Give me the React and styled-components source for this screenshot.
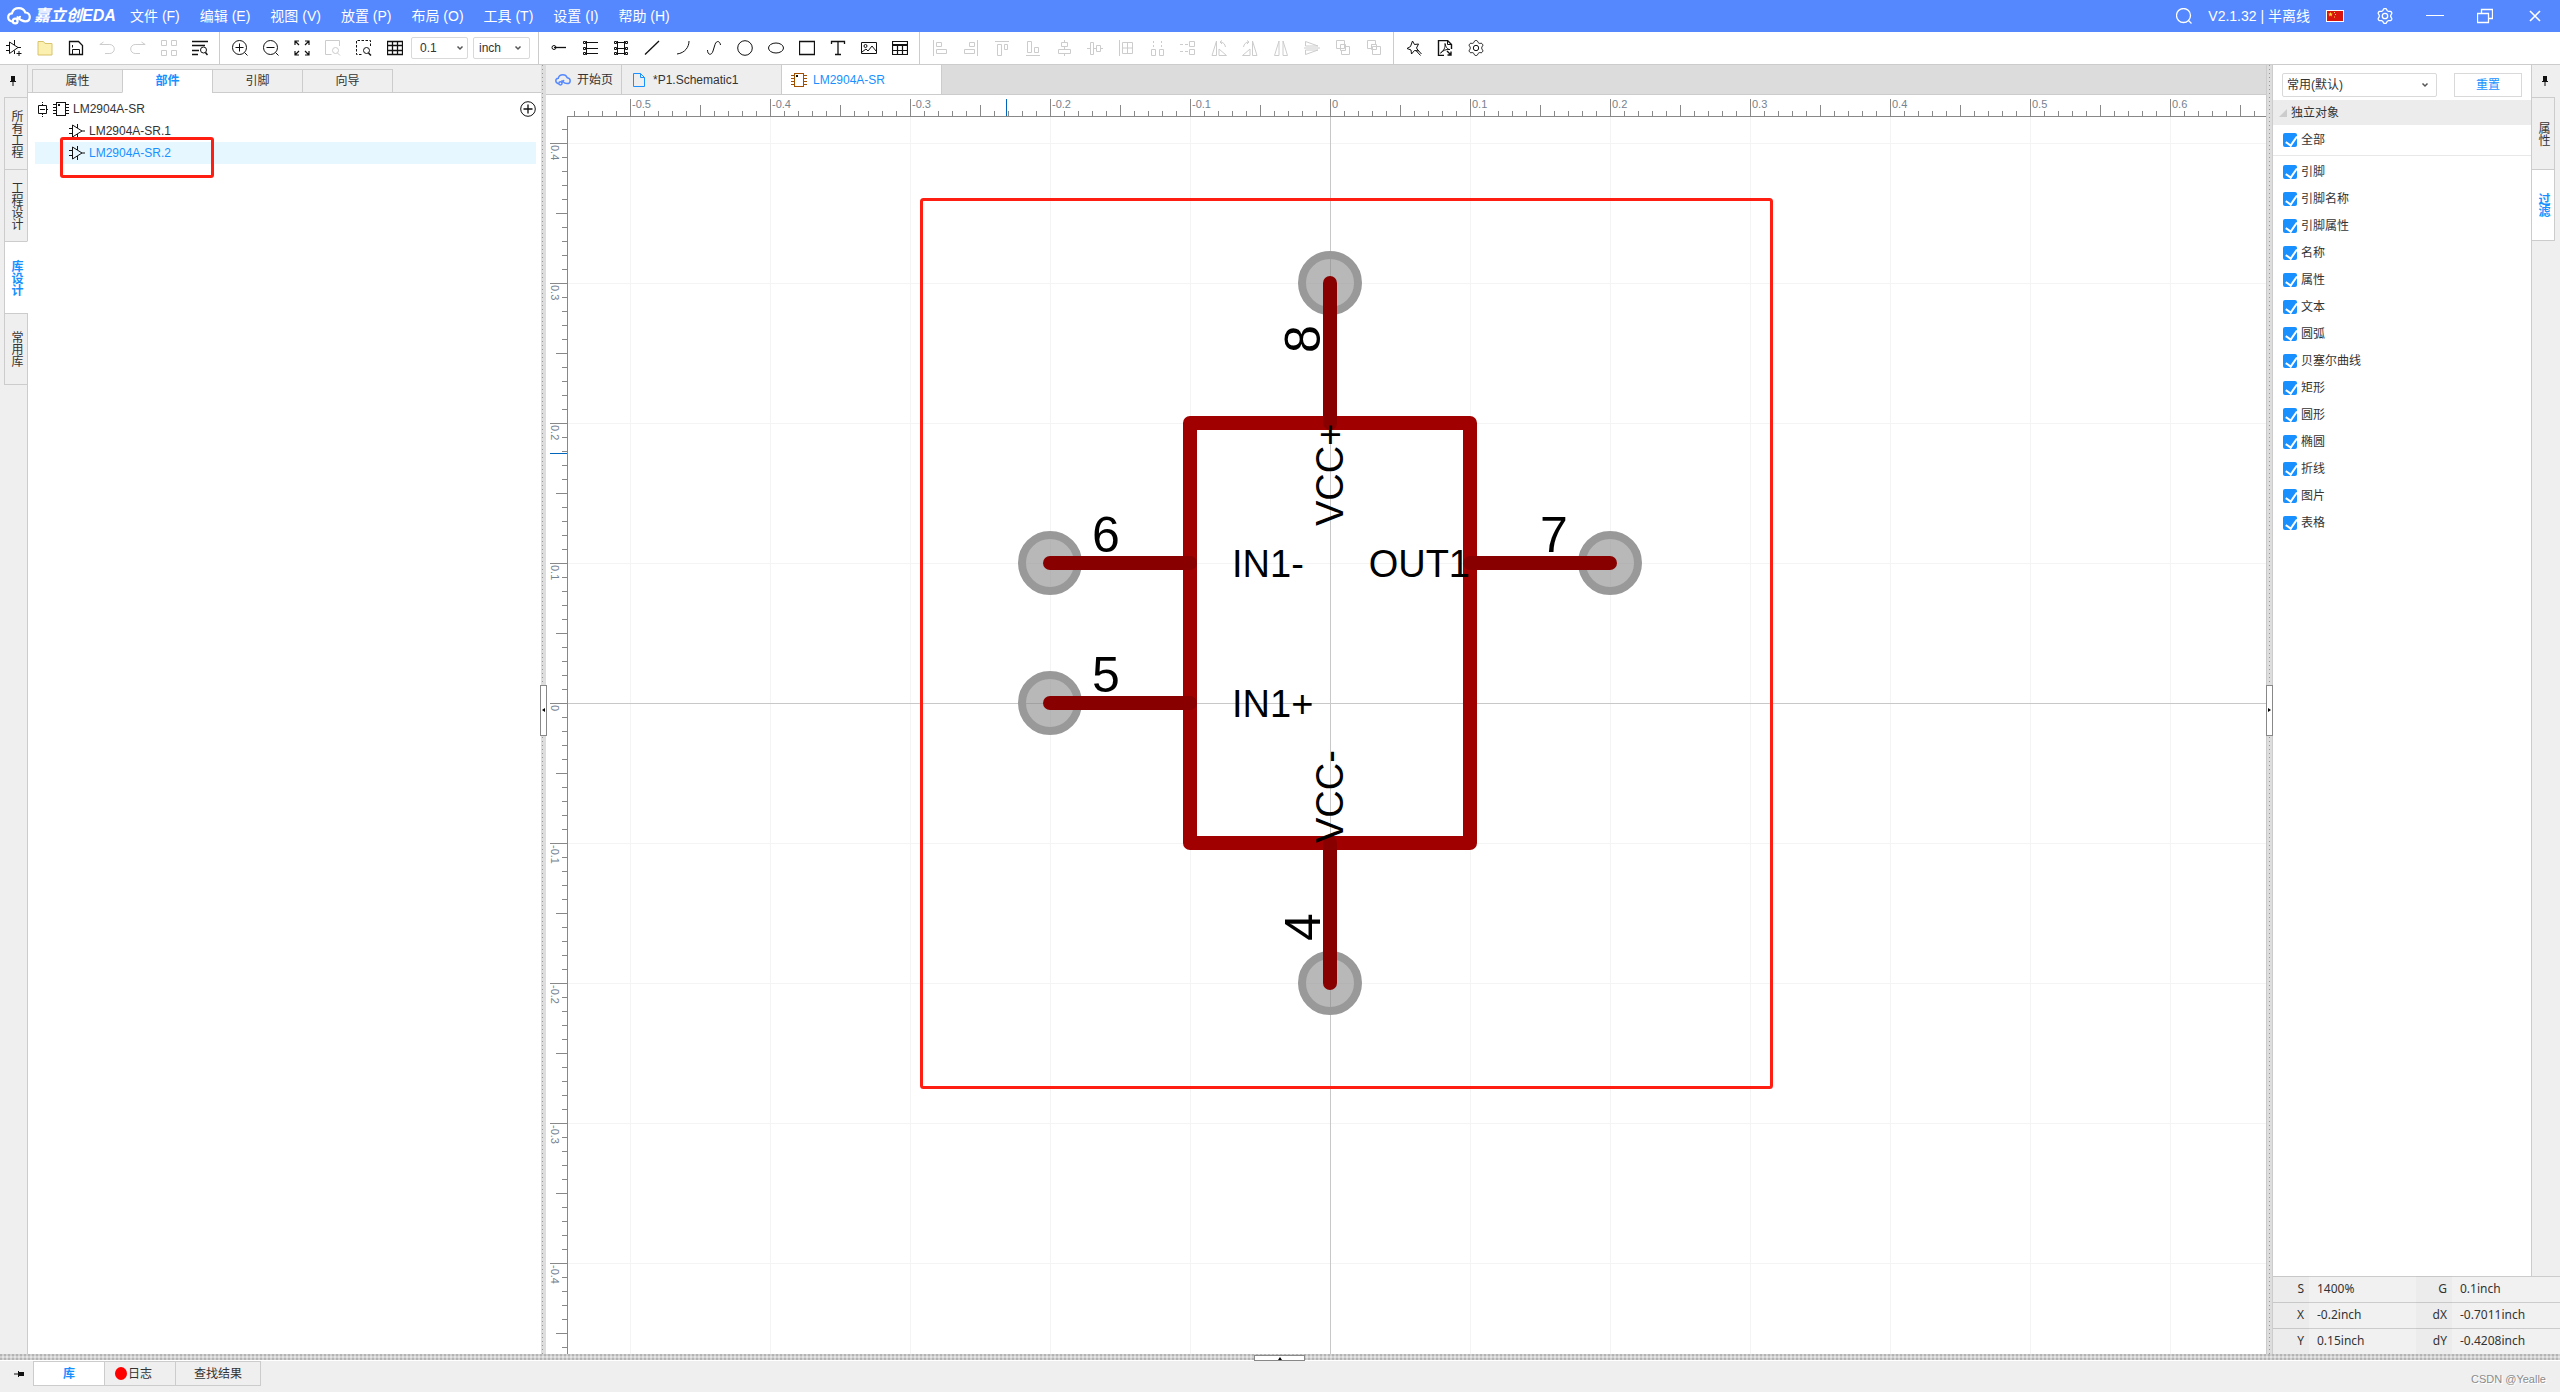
import React from 'react';
import styled, { createGlobalStyle, css } from 'styled-components';

const BLUE = '#1890ff';
const LINE = '#cccccc';

const GlobalStyle = createGlobalStyle`
    * {
        box-sizing: border-box;
    }
    body {
        margin: 0;
        overflow: hidden;
        font-family: "Liberation Sans", "Noto Sans CJK SC", sans-serif;
        font-size: 12px;
        line-height: 16px;
        color: #333333;
        background-color: #efefef;
    }
    button, select, input {
        margin: 0;
        padding: 0;
        border: none;
        background: none;
        font: inherit;
        color: inherit;
    }
    button {
        cursor: pointer;
    }
    svg {
        display: block;
        flex: none;
    }
`

const Page = styled.div`
    height: 100vh;
    display: flex;
    flex-flow: column;
`

/* ---------- title bar ---------- */

const TitleBar = styled.header`
    flex: none;
    height: 32px;
    display: flex;
    align-items: center;
    background-color: #5588ff;
    color: #ffffff;
    font-size: 14px;
    line-height: 20px;
`

const Logo = styled.div`
    display: flex;
    align-items: center;
    gap: 3px;
    width: 130px;
    padding-left: 7px;
    font-size: 16px;
    font-weight: 700;
    font-style: italic;
    white-space: nowrap;
`

const Menu = styled.nav`
    display: flex;
    flex: 1;
    gap: 20px;
`

const Version = styled.div`
    display: flex;
    align-items: center;
    gap: 16px;
    padding-right: 16px;
`

const WindowButton = styled.button`
    width: 50px;
    height: 32px;
    display: flex;
    align-items: center;
    justify-content: center;
`

/* ---------- toolbar ---------- */

const ToolBar = styled.div`
    flex: none;
    height: 33px;
    display: flex;
    border-bottom: 1px solid ${LINE};
    background-color: #ffffff;
`

const ToolGroup = styled.div`
    display: flex;
    align-items: center;
    gap: 9px;
    padding: 0 8px 0 ${(props) => props.$start || 9}px;
    & + & {
        border-left: 1px solid ${LINE};
    }
`

const ToolButton = styled.button`
    width: 22px;
    height: 28px;
    display: flex;
    align-items: center;
    justify-content: center;
    color: ${(props) => (props.disabled ? '#cccccc' : '#111111')};
`

const ToolSelects = styled.div`
    display: flex;
    align-items: center;
    gap: 5px;
    margin-left: -4px;
`

const SelectBox = styled.div`
    position: relative;
    width: ${(props) => props.$width}px;
    height: ${(props) => props.$height}px;
    select {
        appearance: none;
        width: 100%;
        height: 100%;
        padding-left: ${(props) => props.$indent}px;
        border: 1px solid #d9d9d9;
        border-radius: 2px;
        background-color: #ffffff;
    }
    svg {
        position: absolute;
        right: ${(props) => props.$arrow}px;
        top: 50%;
        margin-top: -3px;
        pointer-events: none;
    }
`

/* ---------- main area ---------- */

const Main = styled.main`
    flex: 1;
    min-height: 0;
    display: flex;
`

const Rail = styled.div`
    flex: none;
    width: 28px;
    display: flex;
    flex-flow: column;
    align-items: ${(props) => (props.$right ? 'flex-start' : 'flex-end')};
    background-color: #efefef;
    ${(props) => !props.$right && css`
        box-shadow: inset -1px 0 ${LINE};
    `}
`

const RailPin = styled.button`
    width: 100%;
    height: 32px;
    display: flex;
    align-items: center;
    justify-content: center;
    padding-right: 2px;
`

const RailTab = styled.button`
    width: ${(props) => (props.$right ? 23 : 24)}px;
    height: 72px;
    display: flex;
    align-items: center;
    justify-content: center;
    border-top: 1px solid ${LINE};
    border-left: ${(props) => (props.$right ? 'none' : `1px solid ${LINE}`)};
    border-right: 1px solid ${(props) => (props.$active && !props.$right ? '#ffffff' : LINE)};
    background-color: ${(props) => (props.$active ? '#ffffff' : '#efefef')};
    color: ${(props) => (props.$active ? BLUE : '#333333')};
    font-weight: ${(props) => (props.$active ? 700 : 400)};
    writing-mode: vertical-rl;
    white-space: nowrap;
    &:last-child {
        border-bottom: 1px solid ${LINE};
    }
`

const SidePanel = styled.section`
    position: relative;
    flex: none;
    width: 513px;
    background-color: #ffffff;
`

const SideTabs = styled.div`
    height: 28px;
    display: flex;
    padding: 4px 0 0 4px;
    background-color: #efefef;
    box-shadow: inset 0 -1px ${LINE};
`

const SideTab = styled.button`
    width: 90px;
    border: 1px solid ${LINE};
    border-right: none;
    background-color: #efefef;
    ${(props) => props.$active && css`
        border-bottom-color: #ffffff;
        background-color: #ffffff;
        color: ${BLUE};
        font-weight: 700;
    `}
    &:last-child {
        width: 91px;
        border-right: 1px solid ${LINE};
    }
`

const Tree = styled.div`
    padding: 5px 5px 0 7px;
`

const TreeRow = styled.div`
    height: 22px;
    display: flex;
    align-items: center;
    gap: 4px;
    padding-left: ${(props) => props.$indent}px;
    background-color: ${(props) => (props.$active ? '#e6f7ff' : 'transparent')};
    color: ${(props) => (props.$active ? BLUE : '#333333')};
    .add {
        margin-left: auto;
    }
`

const SideMark = styled.div`
    position: absolute;
    left: 32px;
    top: 72px;
    width: 154px;
    height: 41px;
    border: 3px solid #ff1e12;
    border-radius: 3px;
`

const Splitter = styled.div`
    position: relative;
    flex: none;
    width: ${(props) => props.$width}px;
    background-color: #dddddd;
    background-image: linear-gradient(#999999 1px, transparent 1px);
    background-size: 1px 4px;
    background-repeat: repeat-y;
    background-position: ${(props) => props.$dot}px 0;
    ${(props) => props.$lined && css`
        border: 1px solid ${LINE};
        border-width: 0 1px;
    `}
`

const SplitHandle = styled.button`
    position: absolute;
    left: -1px;
    top: 50%;
    width: 7px;
    height: 51px;
    margin-top: -25px;
    border: 1px solid #888888;
    background-color: #ffffff;
    display: flex;
    align-items: center;
    justify-content: center;
    z-index: 1;
`

const Editor = styled.section`
    flex: 1;
    min-width: 0;
    display: flex;
    flex-flow: column;
    background-color: #ffffff;
`

const DocTabs = styled.div`
    flex: none;
    height: 30px;
    display: flex;
    border-bottom: 1px solid ${LINE};
    background-color: #dcdcdc;
`

const DocTab = styled.button`
    width: ${(props) => props.$width}px;
    display: flex;
    align-items: center;
    gap: 6px;
    padding-left: 9px;
    border-right: 1px solid ${LINE};
    background-color: ${(props) => (props.$active ? '#ffffff' : '#eeeeee')};
    color: ${(props) => (props.$active ? BLUE : '#333333')};
    white-space: nowrap;
`

const Sheet = styled.svg`
    flex: 1;
    width: 100%;
    min-height: 0;
    font-family: "Liberation Sans", sans-serif;
    .ruler {
        stroke: #888888;
        fill: none;
        shape-rendering: crispEdges;
    }
    .label {
        font-size: 11px;
        fill: #75828f;
    }
    .grid {
        stroke: #f4f4f4;
        fill: none;
        shape-rendering: crispEdges;
    }
    .axis {
        stroke: #c8c8c8;
        shape-rendering: crispEdges;
    }
    .cursor {
        stroke: #0066bb;
        shape-rendering: crispEdges;
    }
    .number {
        font-size: 50px;
    }
    .name {
        font-size: 38px;
    }
`

/* ---------- right side ---------- */

const RightSide = styled.aside`
    flex: none;
    width: 287px;
    display: flex;
    flex-flow: column;
`

const RightTop = styled.div`
    flex: 1;
    display: flex;
`

const FilterPanel = styled.div`
    flex: 1;
    border-right: 1px solid ${LINE};
    background-color: #ffffff;
`

const FilterTop = styled.div`
    display: flex;
    justify-content: space-between;
    padding: 8px 9px 3px 9px;
`

const ResetButton = styled.button`
    width: 68px;
    height: 24px;
    border: 1px solid #d9d9d9;
    color: ${BLUE};
`

const SectionTitle = styled.h2`
    height: 25px;
    display: flex;
    align-items: center;
    gap: 4px;
    margin: 0;
    padding-left: 6px;
    background-color: #ececec;
    font-size: 12px;
    font-weight: 400;
`

const CheckRow = styled.label`
    height: 27px;
    display: flex;
    align-items: center;
    gap: 4px;
    padding-left: 10px;
    ${(props) => props.$all && css`
        height: 31px;
        margin-bottom: 2px;
        border-bottom: 1px solid #e8e8e8;
    `}
    input {
        appearance: none;
        position: relative;
        width: 14px;
        height: 14px;
        border-radius: 2px;
        background-color: ${BLUE};
    }
    input:checked::after {
        content: "";
        position: absolute;
        left: 5px;
        top: 1px;
        width: 5px;
        height: 10px;
        border: solid #ffffff;
        border-width: 0 2px 2px 0;
        transform: rotate(35deg);
    }
`

const StatusTable = styled.table`
    width: 100%;
    table-layout: fixed;
    border-collapse: collapse;
    background-color: #f1f1f1;
    font-family: "Noto Sans", "Noto Sans CJK SC", sans-serif;
    tr {
        height: 26px;
        box-shadow: inset 0 1px ${LINE};
    }
    th, td {
        padding: 0;
        font-weight: 400;
    }
    th {
        width: 36px;
        padding-right: 5px;
        text-align: right;
        background-color: rgba(0, 0, 0, 0.02);
    }
    td {
        padding-left: 8px;
    }
`

/* ---------- bottom ---------- */

const BottomSplitter = styled.div`
    position: relative;
    flex: none;
    height: 7px;
    border-bottom: 1px solid #ffffff;
    background-color: #d0d0d0;
    background-image: radial-gradient(circle at 1px 1px, #b4b4b4 1px, transparent 1px),
        radial-gradient(circle at 3px 3px, #e4e4e4 1px, transparent 1px);
    background-size: 4px 4px;
`

const BottomHandle = styled.button`
    position: absolute;
    left: 49%;
    top: 1px;
    width: 51px;
    height: 6px;
    border: 1px solid #888888;
    background-color: #ffffff;
    display: flex;
    align-items: center;
    justify-content: center;
`

const BottomBar = styled.footer`
    flex: none;
    height: 31px;
    display: flex;
    align-items: flex-start;
    background-color: #efefef;
`

const BottomPin = styled.button`
    width: 33px;
    height: 25px;
    display: flex;
    align-items: center;
    justify-content: center;
    padding-left: 5px;
`

const BottomTab = styled.button`
    width: ${(props) => props.$width}px;
    height: 25px;
    display: flex;
    align-items: center;
    justify-content: center;
    gap: 1px;
    border: 1px solid ${LINE};
    border-right: none;
    ${(props) => props.$active && css`
        background-color: #ffffff;
        color: ${BLUE};
        font-weight: 700;
    `}
    ${(props) => props.$alert && css`
        justify-content: flex-start;
        padding-left: 10px;
    `}
    &:last-of-type {
        border-right: 1px solid ${LINE};
    }
`

const RedDot = styled.span`
    width: 12px;
    height: 13px;
    border-radius: 50%;
    background-color: #ff0000;
`

const Watermark = styled.span`
    margin: 10px 14px 0 auto;
    color: #8c8c8c;
    font-size: 11px;
    text-shadow: 1px 1px #ffffff;
`

/* ---------- icons ---------- */

const Icon = ({ size = 16, children, ...rest }) => (
    <svg width={size} height={size} viewBox='0 0 16 16' fill='none' stroke='currentColor' {...rest}>
        {children}
    </svg>
)

const CloudIcon = ({ width, height, stroke }) => (
    <svg width={width} height={height} viewBox='0 0 24 18' fill='none' stroke={stroke} strokeWidth='2.2' strokeLinecap='round'>
        <path d='M5 14.500C2.500 14 1.200 12.300 1.200 10.300 1.200 8 3 6.500 5 6.300 5.700 3.300 8.500 1.200 11.800 1.200c3 0 5.500 1.700 6.500 4.300 2.600.3 4.500 2.200 4.500 4.500 0 2.700-2 4.400-4.700 4.400-3.600 0-5.500-2.200-7.600-4.200' />
        <circle cx='8.200' cy='14' r='2.400' />
        <path d='M10 12.500 13 9.800' />
    </svg>
)

const Chevron = () => (
    <svg width='8' height='6' viewBox='0 0 8 6' fill='none' stroke='#555555' strokeWidth='1.5'>
        <path d='M1.500 1.500 4 4 6.500 1.500' />
    </svg>
)

const PinIcon = ({ flat }) => (
    <svg width='10' height='10' viewBox='0 0 10 10' fill='#111111'>
        <g transform={flat ? 'rotate(90 5 5)' : undefined}>
            <path d='M3 0h4v5H3zM2 5h6v1H2zM4.500 6h1v4h-1z' />
        </g>
    </svg>
)

// six soft teeth, one of them pointing up
const gearPath = Array.from({ length: 72 }, (_, i) => {
    const a = (i * Math.PI) / 36
    const wave = Math.cos(6 * a)
    const r = 6.6 + 0.9 * Math.sign(wave) * Math.sqrt(Math.abs(wave))
    return `${(8 + r * Math.sin(a)).toFixed(2)} ${(8 - r * Math.cos(a)).toFixed(2)}`
}).join('L')

const GearShape = () => (
    <>
        <path d={`M${gearPath}Z`} strokeLinejoin='round' />
        <circle cx='8' cy='8' r='2.700' />
    </>
)

const ChipIcon = ({ color, dot = color }) => (
    <Icon stroke={color}>
        <rect x='3.500' y='1.500' width='9' height='13' />
        <path d='M0 3.500h3M0 6.500h3M0 9.500h3M0 12.500h3M13 3.500h3M13 6.500h3M13 9.500h3M13 12.500h3' />
        <path d='M5 3h2v2H5z' fill={dot} stroke='none' />
    </Icon>
)

const OpAmp = () => (
    <Icon stroke='#111111'>
        <path d='M3.500 2v12L13 8zM0 5.500h3.500M0 10.500h3.500M13 8h3M8.500 1v4M8.500 11v4' />
    </Icon>
)

const flipX = 'matrix(-1 0 0 1 16 0)'

const icons = {
    newPart: <><path d='M3.500 2v11.500L12 7.500zM0 5.500h3.500M0 10.500h3.500M12 7.500h3M8.500 0v5M8.500 10.500V14' /><path d='M10.500 13.500h5M13 11v5' /></>,
    folder: <path d='M1 1.500h5.500l1.500 2h7v11.500H1z' fill='#fbf0b0' stroke='#d9c46c' />,
    save: <><path d='M1.500 1.500h9l4 4v9h-13z' strokeWidth='1.300' /><path d='M4.500 14V9.500h7V14M4.500 5v2.500' /></>,
    undo: <path d='M4.500 2 .8 4.500h10a4.500 4.500 0 0 1 0 9H6' />,
    redo: <path transform={flipX} d='M4.500 2 .8 4.500h10a4.500 4.500 0 0 1 0 9H6' />,
    tiles: <path d='M.5.5h5v5h-5zM10.500.5h5v5h-5zM.5 10.500h5v5h-5zM10.500 10.500h5v5h-5z' />,
    find: <><path d='M0 1.500h16M0 5.500h13M0 10.500h7M0 14.500h6' strokeWidth='1.500' /><circle cx='11.500' cy='10' r='3' /><path d='m13.500 12.500 2 2.500' strokeWidth='1.500' /></>,
    zoomIn: <><circle cx='7.500' cy='7.500' r='7' /><path d='M3.500 7.500h8M7.500 3.500v8M12.500 12.500l3 3' /></>,
    zoomOut: <><circle cx='7.500' cy='7.500' r='7' /><path d='M3.500 7.500h8M12.500 12.500l3 3' /></>,
    fit: <path d='M1 5V1h4M1 1l4 4M11 1h4v4M15 1l-4 4M1 11v4h4M1 15l4-4M15 11v4h-4M15 15l-4-4' strokeWidth='1.200' />,
    zoomPage: <><path d='M14.500 6V.5H.5v14h6' /><circle cx='10.500' cy='10.500' r='3' /><path d='m12.500 13 2.500 2.500' /></>,
    zoomArea: <><path d='M14.500 6V.5H.5v14h6' strokeDasharray='2.500 1.500' /><circle cx='10.500' cy='10.500' r='3' /><path d='m12.500 13 2.500 2.500' strokeWidth='1.500' /></>,
    grid: <path d='M.5 1.500h15v13H.5zM.5 5.500h15M.5 10.500h15M5.500 1.500v13M10.500 1.500v13' strokeWidth='1.300' />,
    pin: <><circle cx='3' cy='7.500' r='2' /><path d='M3 7.500h12' strokeWidth='1.300' /></>,
    pinRow: <path d='M4 2.500h12M4 8.500h12M4 13.500h12M4.500 1v14M1.500 1.500h2v2h-2zM1.500 7.500h2v2h-2zM1.500 12.500h2v2h-2z' />,
    pinBox: <path d='M4 2.500h8M4 8.500h8M4 13.500h8M4.500 1v14M11.500 1v14M1.500 1.500h2v2h-2zM1.500 7.500h2v2h-2zM1.500 12.500h2v2h-2zM12.500 1.500h2v2h-2zM12.500 7.500h2v2h-2zM12.500 12.500h2v2h-2z' />,
    line: <path d='M1 14.500 15 1' strokeWidth='1.300' />,
    arc: <path d='M14 1c0 6-4 12-12 13' />,
    bezier: <path d='M1.500 10c0 5 4 6 5.500 1l2-6.500C10.500 0 14 1 14.500 5' />,
    circle: <circle cx='8' cy='8' r='7.300' />,
    ellipse: <ellipse cx='8' cy='8' rx='7.500' ry='5' />,
    rect: <path d='M.5 1.500h15v13H.5z' strokeWidth='1.300' />,
    text: <path d='M1.500 4V1.500h13V4M8 1.500v13M5 14.500h6' strokeWidth='1.300' />,
    image: <><path d='M.5 2.500h15v11H.5z' /><circle cx='4.500' cy='6' r='1.500' /><path d='m1 12 4-3 2 2 4-5 4 5' /></>,
    table: <path d='M.5 1.500h15v13H.5zM.5 5.500h15M.5 10.500h15M5.500 5.500v9M10.500 5.500v9M.5 4.500h15' strokeWidth='1.200' />,
    alignLeft: <path d='M1.500 0v16M4.500 2.500h5v4h-5zM4.500 9.500h10v4h-10z' />,
    alignRight: <path transform={flipX} d='M1.500 0v16M4.500 2.500h5v4h-5zM4.500 9.500h10v4h-10z' />,
    alignTop: <path d='M1 1.500h14M3.500 4.500h4v11h-4zM10.500 4.500h3v5h-3z' />,
    alignBottom: <path d='M1 15.500h14M2.500 1.500h4v11h-4zM9.500 7.500h4v5h-4z' />,
    alignMiddle: <path d='M8.500 0v2M8.500 6.500v3M8.500 13.500V16M5.500 2.500h6v4h-6zM2.500 9.500h12v4h-12z' />,
    alignCenter: <path d='M0 8.500h3M6.500 8.500h3M13.500 8.500H16M3.500 2.500h3v12h-3zM9.500 5.500h4v6h-4z' />,
    alignGrid: <path d='M1.500 0v16M4.500 2.500h10v11h-10zM4.500 8h10M9.500 2.500v11' />,
    spreadX: <path d='M4.500 1v2M4.500 5v2M12.500 1v2M12.500 5v2M2.500 9.500h4v6h-4zM10.500 9.500h4v6h-4z' />,
    spreadY: <path d='M0 4.500h3M5 4.500h3M0 11.500h3M5 11.500h3M9.500 1.500h5v5h-5zM9.500 9.500h5v5h-5z' />,
    rotateLeft: <path d='M1 15.500 5.500 1v14.500zM8 15.500V9l7.500 6.500zM9 2c3 0 5 2 5.500 5M9 2l2-1.500M9 2l2 2' />,
    rotateRight: <path transform={flipX} d='M1 15.500 5.500 1v14.500zM8 15.500V9l7.500 6.500zM9 2c3 0 5 2 5.500 5M9 2l2-1.500M9 2l2 2' />,
    mirrorX: <path d='M1.500 15.500 6 1v14.500zM14.500 15.500 10 1v14.500z' />,
    mirrorY: <path d='M1.500 1.500V6H14zM1.500 14.500V10H14zM0 8h16' />,
    toFront: <path d='M1.500.5h8v8h-8zM5.500 4.500h5v6h-5zM9.500 6.500h5v8h-8v-4' />,
    toBack: <path d='M1.500.5h8v4h-4v4h-4zM6.500 6.500h8v8h-8zM5.500 4.500h5v5h-5z' />,
    wizard: <path d='M6.500 1 8.500 4.500l4-.5-2 4 2 3-4-.5L5.500 14 5 10 1 8.500l3.500-2zM9.500 10l5 5.500M11 9l4.500 5' />,
    pdf: <><path d='M7 15.500H1.500V.5h9l4 4V9' strokeWidth='1.400' /><path d='M10.500.5v4h4' /><path d='M3.500 13C7 11 8.500 7 8 3.500 9 8 11 9.500 13 9.500 9 9 6 10.500 3.500 13z' /><path d='m10 11 4 4M14 11.500V15h-3.500' strokeWidth='1.400' /></>,
    gear: <GearShape />,
}

const groups = [
    { start: 3, tools: ['newPart', 'folder', 'save', 'undo', 'redo', 'tiles', 'find'] },
    { tools: ['zoomIn', 'zoomOut', 'fit', 'zoomPage', 'zoomArea', 'grid'], selects: true },
    { tools: ['pin', 'pinRow', 'pinBox', 'line', 'arc', 'bezier', 'circle', 'ellipse', 'rect', 'text', 'image', 'table'] },
    {
        off: true,
        tools: ['alignLeft', 'alignRight', 'alignTop', 'alignBottom', 'alignMiddle', 'alignCenter', 'alignGrid', 'spreadX',
            'spreadY', 'rotateLeft', 'rotateRight', 'mirrorX', 'mirrorY', 'toFront', 'toBack'],
    },
    { tools: ['wizard', 'pdf', 'gear'] },
]

const disabledTools = ['undo', 'redo', 'tiles', 'zoomPage']

const menus = ['文件 (F)', '编辑 (E)', '视图 (V)', '放置 (P)', '布局 (O)', '工具 (T)', '设置 (I)', '帮助 (H)']

const filters = ['引脚', '引脚名称', '引脚属性', '名称', '属性', '文本', '圆弧', '贝塞尔曲线', '矩形', '圆形', '椭圆', '折线', '图片', '表格']

const status = [
    ['S', '1400%', 'G', '0.1inch'],
    ['X', '-0.2inch', 'dX', '-0.7011inch'],
    ['Y', '0.15inch', 'dY', '-0.4208inch'],
]

/* ---------- schematic sheet ---------- */

// sheet origin and the length of 0.1 inch at the current zoom
const OX = 784
const OY = 608
const STEP = 140
const RULER = 21

const range = (from, to) => Array.from({ length: to - from + 1 }, (_, i) => from + i)
const tickLength = (n) => (n % 10 === 0 ? 17 : n % 5 === 0 ? 11 : 5)
const unit = (n) => (n === 0 ? '0' : (n / 10).toString())

const pins = [
    { number: '8', x: 784, y: 188, dx: 0, dy: STEP },
    { number: '6', x: 504, y: 468, dx: STEP, dy: 0 },
    { number: '5', x: 504, y: 608, dx: STEP, dy: 0 },
    { number: '7', x: 1064, y: 468, dx: -STEP, dy: 0 },
    { number: '4', x: 784, y: 888, dx: 0, dy: -STEP },
]

const Pin = ({ number, x, y, dx, dy }) => {
    const nx = dx === 0 ? x - 10 : x + dx * 0.4
    const ny = dx === 0 ? y + dy * 0.4 : y - 11
    return (
        <g>
            <circle cx={x} cy={y} r='28' fill='#888888' fillOpacity='0.6' stroke='#999999' strokeWidth='8' />
            <path d={`M${x} ${y}l${dx} ${dy}`} stroke='#880000' strokeWidth='14' strokeLinecap='round' />
            <text
                className='number'
                x={nx}
                y={ny}
                textAnchor='middle'
                transform={dx === 0 ? `rotate(-90 ${nx} ${ny})` : undefined}
            >
                {number}
            </text>
        </g>
    )
}

const Schematic = () => {
    const xs = range(-5, 6)
    const ys = range(-4, 4)
    const xTicks = range(-54, 66).map((n) => `M${OX + n * 14 + 0.5} ${RULER}v${-tickLength(n)}`).join('')
    const yTicks = range(-41, 46).map((n) => `M${RULER} ${OY + n * 14 + 0.5}h${-tickLength(n)}`).join('')
    return (
        <Sheet>
            <path className='grid' d={xs.map((n) => `M${OX + n * STEP + 0.5} 22v4000`).join('')} />
            <path className='grid' d={ys.map((n) => `M22 ${OY + n * STEP + 0.5}h6000`).join('')} />
            <path className='axis' d={`M${OX + 0.5} 22v4000M22 ${OY + 0.5}h6000`} />
            <path className='ruler' d={`${xTicks}${yTicks}M21 21.500h6000M21.500 21v4000`} />
            {xs.map((n) => (
                <text className='label' key={n} x={OX + n * STEP + 2} y='13'>{unit(n)}</text>
            ))}
            {ys.map((n) => (
                <text className='label' key={n} transform={`translate(5 ${OY + n * STEP + 2}) rotate(90)`}>{unit(-n)}</text>
            ))}
            <path className='cursor' d='M460.500 4v17M4 358.500h17' />

            <rect x='644' y='328' width='280' height='420' fill='none' stroke='#a00000' strokeWidth='14' strokeLinejoin='round' />
            {pins.map((pin) => <Pin key={pin.number} {...pin} />)}
            <text className='name' x='686' y='482'>IN1-</text>
            <text className='name' x='686' y='622'>IN1+</text>
            <text className='name' x='924' y='482' textAnchor='end'>OUT1</text>
            <text className='name' transform='translate(797 431) rotate(-90)'>VCC+</text>
            <text className='name' transform='translate(797 748) rotate(-90)'>VCC-</text>
            <rect x='375.500' y='104.500' width='850' height='888' rx='2' fill='none' stroke='#ff1e12' strokeWidth='3' />
        </Sheet>
    )
}

/* ---------- page parts ---------- */

const Header = () => (
    <TitleBar>
        <Logo>
            <CloudIcon width={24} height={18} stroke='#ffffff' />
            <span>嘉立创EDA</span>
        </Logo>
        <Menu>
            {menus.map((m) => <button key={m}>{m}</button>)}
        </Menu>
        <Version>
            <Icon>
                <circle cx='7.500' cy='7.500' r='7' strokeWidth='1.300' />
                <path d='m12.500 12.500 3 3' strokeWidth='1.300' />
            </Icon>
            <span>V2.1.32 | 半离线</span>
            <svg width='18' height='12' viewBox='0 0 18 12'>
                <rect x='.5' y='.5' width='17' height='11' fill='#d8140c' stroke='#ffffff' />
                <path d='m4.500 2 .7 1.500 1.600.2-1.200 1.100.3 1.600-1.400-.8-1.400.8.300-1.600L2.200 3.700l1.600-.2zM8 2h1v1H8zM9 4h1v1H9zM8 6.500h1v1H8z' fill='#ffd83a' />
            </svg>
        </Version>
        <WindowButton aria-label='设置'>
            <Icon strokeWidth='1.300'><GearShape /></Icon>
        </WindowButton>
        <WindowButton aria-label='最小化'>
            <svg width='18' height='2' fill='#ffffff'><rect width='18' height='1' /></svg>
        </WindowButton>
        <WindowButton aria-label='还原'>
            <Icon><path d='M.5 5.500h11v9H.5zM4.500 5.500v-4h11v9h-4' strokeWidth='1.300' /></Icon>
        </WindowButton>
        <WindowButton aria-label='关闭'>
            <Icon><path d='m3 3 10 10M13 3 3 13' strokeWidth='1.600' /></Icon>
        </WindowButton>
    </TitleBar>
)

const Tools = () => (
    <ToolBar>
        {groups.map((group, i) => (
            <ToolGroup key={i} $start={group.start}>
                {group.tools.map((name) => (
                    <ToolButton key={name} aria-label={name} disabled={group.off || disabledTools.includes(name)}>
                        <Icon>{icons[name]}</Icon>
                    </ToolButton>
                ))}
                {group.selects && (
                    <ToolSelects>
                        <SelectBox $width={57} $height={22} $indent={8} $arrow={4}>
                            <select aria-label='网格' defaultValue='0.1'><option>0.1</option></select>
                            <Chevron />
                        </SelectBox>
                        <SelectBox $width={57} $height={22} $indent={5} $arrow={8}>
                            <select aria-label='单位' defaultValue='inch'><option>inch</option></select>
                            <Chevron />
                        </SelectBox>
                    </ToolSelects>
                )}
            </ToolGroup>
        ))}
    </ToolBar>
)

const Library = () => (
    <>
        <Rail>
            <RailPin aria-label='固定'><PinIcon /></RailPin>
            <RailTab>所有工程</RailTab>
            <RailTab>工程设计</RailTab>
            <RailTab $active>库设计</RailTab>
            <RailTab>常用库</RailTab>
        </Rail>
        <SidePanel>
            <SideTabs>
                <SideTab>属性</SideTab>
                <SideTab $active>部件</SideTab>
                <SideTab>引脚</SideTab>
                <SideTab>向导</SideTab>
            </SideTabs>
            <Tree>
                <TreeRow $indent={2}>
                    <svg width='12' height='16' viewBox='0 0 12 16' fill='none' stroke='#111111'>
                        <path d='M1.500 4.500h8v8h-8zM3 8.500h5' />
                        <path d='M5.500 1v3M5.500 13v3M10 8.500h2' strokeDasharray='1 1' />
                    </svg>
                    <ChipIcon color='#111111' />
                    <span>LM2904A-SR</span>
                    <button className='add' aria-label='添加部件'>
                        <Icon stroke='#111111'>
                            <circle cx='8' cy='8' r='7.300' />
                            <path d='M3.500 8h9M8 3.500v9' strokeWidth='1.300' />
                        </Icon>
                    </button>
                </TreeRow>
                <TreeRow $indent={34}>
                    <OpAmp />
                    <span>LM2904A-SR.1</span>
                </TreeRow>
                <TreeRow $indent={34} $active>
                    <OpAmp />
                    <span>LM2904A-SR.2</span>
                </TreeRow>
            </Tree>
            <SideMark />
        </SidePanel>
    </>
)

const Filters = () => (
    <RightSide>
        <RightTop>
            <FilterPanel>
                <FilterTop>
                    <SelectBox $width={155} $height={24} $indent={4} $arrow={8}>
                        <select aria-label='过滤方案' defaultValue='常用(默认)'><option>常用(默认)</option></select>
                        <Chevron />
                    </SelectBox>
                    <ResetButton>重置</ResetButton>
                </FilterTop>
                <SectionTitle>
                    <svg width='8' height='8' fill='#cccccc'><path d='M8 0v8H0z' /></svg>
                    独立对象
                </SectionTitle>
                <CheckRow $all>
                    <input type='checkbox' defaultChecked />
                    全部
                </CheckRow>
                {filters.map((f) => (
                    <CheckRow key={f}>
                        <input type='checkbox' defaultChecked />
                        {f}
                    </CheckRow>
                ))}
            </FilterPanel>
            <Rail $right>
                <RailPin aria-label='固定'><PinIcon /></RailPin>
                <RailTab $right>属性</RailTab>
                <RailTab $right $active>过滤</RailTab>
            </Rail>
        </RightTop>
        <StatusTable>
            <colgroup>
                <col width='36' />
                <col width='107' />
                <col width='36' />
                <col />
            </colgroup>
            <tbody>
                {status.map((row) => (
                    <tr key={row[0]}>
                        <th scope='row'>{row[0]}</th>
                        <td>{row[1]}</td>
                        <th>{row[2]}</th>
                        <td>{row[3]}</td>
                    </tr>
                ))}
            </tbody>
        </StatusTable>
    </RightSide>
)

const App = () => {
    return (
        <Page>
            <GlobalStyle />
            <Header />
            <Tools />
            <Main>
                <Library />
                <Splitter $width={5} $dot={1}>
                    <SplitHandle aria-label='收起左侧'>
                        <svg width='3' height='4'><path d='M3 0v4L0 2z' /></svg>
                    </SplitHandle>
                </Splitter>
                <Editor>
                    <DocTabs>
                        <DocTab $width={76}>
                            <CloudIcon width={16} height={12} stroke='#5588ff' />
                            开始页
                        </DocTab>
                        <DocTab $width={160}>
                            <Icon stroke={BLUE}>
                                <path d='M2.500 1.500h7l4 4v9h-11zM9.500 1.500v4h4' />
                            </Icon>
                            *P1.Schematic1
                        </DocTab>
                        <DocTab $width={160} $active>
                            <ChipIcon color='#a05000' dot='#111111' />
                            LM2904A-SR
                        </DocTab>
                    </DocTabs>
                    <Schematic />
                </Editor>
                <Splitter $width={7} $dot={2} $lined>
                    <SplitHandle aria-label='收起右侧'>
                        <svg width='3' height='4'><path d='M0 0v4l3-2z' /></svg>
                    </SplitHandle>
                </Splitter>
                <Filters />
            </Main>
            <BottomSplitter>
                <BottomHandle aria-label='展开底部'>
                    <svg width='4' height='3'><path d='M0 3h4L2 0z' /></svg>
                </BottomHandle>
            </BottomSplitter>
            <BottomBar>
                <BottomPin aria-label='固定'><PinIcon flat /></BottomPin>
                <BottomTab $width={71} $active>库</BottomTab>
                <BottomTab $width={71} $alert><RedDot />日志</BottomTab>
                <BottomTab $width={86}>查找结果</BottomTab>
                <Watermark>CSDN @Yealle</Watermark>
            </BottomBar>
        </Page>
    )
}

export default App;
